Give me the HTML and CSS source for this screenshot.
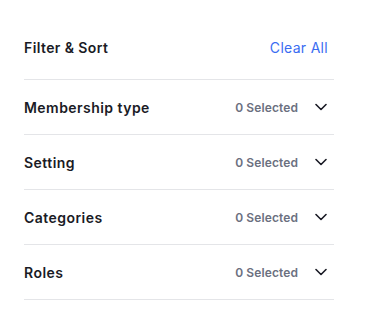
FILE: index.html
```html
<!DOCTYPE html>
<html lang="en">
<head>
    <meta charset="UTF-8">
    <meta name="viewport" content="width=device-width, initial-scale=1.0">
    <title>Filter &amp; Sort</title>
    <link rel="stylesheet" href="styles.css">
</head>
<body>
    <div class="filter-panel">
        <div class="filter-header">
            <h2 class="filter-title">Filter &amp; Sort</h2>
            <button class="clear-all">Clear All</button>
        </div>
        <div class="filter-row">
            <span class="filter-name">Membership type</span>
            <span class="filter-count">0 Selected</span>
            <svg class="chevron" viewBox="0 0 12 8" width="12" height="8"><path d="M1 1.5l5 5 5-5" /></svg>
        </div>
        <div class="filter-row">
            <span class="filter-name">Setting</span>
            <span class="filter-count">0 Selected</span>
            <svg class="chevron" viewBox="0 0 12 8" width="12" height="8"><path d="M1 1.5l5 5 5-5" /></svg>
        </div>
        <div class="filter-row">
            <span class="filter-name">Categories</span>
            <span class="filter-count">0 Selected</span>
            <svg class="chevron" viewBox="0 0 12 8" width="12" height="8"><path d="M1 1.5l5 5 5-5" /></svg>
        </div>
        <div class="filter-row">
            <span class="filter-name">Roles</span>
            <span class="filter-count">0 Selected</span>
            <svg class="chevron" viewBox="0 0 12 8" width="12" height="8"><path d="M1 1.5l5 5 5-5" /></svg>
        </div>
    </div>
</body>
</html>
```

FILE: styles.css
```css
body {
    margin: 0;
    background-color: #fff;
    font-family: Inter, "Noto Sans", sans-serif;
    color: #1a1b25;
}

.filter-panel {
    width: 310px;
    padding: 26px 0 0 24px;
}

.filter-header {
    display: flex;
    justify-content: space-between;
    align-items: center;
    height: 42px;
    padding-bottom: 11px;
    border-bottom: 1px solid #e4e5e8;
}

.filter-title {
    margin: 0;
    font-size: 14px;
    font-weight: 600;
    letter-spacing: 0.4px;
}

.clear-all {
    border: none;
    background: none;
    padding: 0 6px 0 0;
    font-family: inherit;
    font-size: 14px;
    color: #3a6cf2;
    letter-spacing: 0.3px;
    cursor: pointer;
}

.filter-row {
    display: flex;
    align-items: center;
    height: 54px;
    border-bottom: 1px solid #e4e5e8;
}

.filter-name {
    flex: 1;
    font-size: 14px;
    font-weight: 600;
    letter-spacing: 0.45px;
}

.filter-count {
    font-size: 12px;
    font-weight: 600;
    color: #6b7080;
    letter-spacing: 0.1px;
}

.chevron {
    margin: 0 7px 0 17px;
    fill: none;
    stroke: #1a1b25;
    stroke-width: 1.6;
    stroke-linecap: round;
    stroke-linejoin: round;
}
```
